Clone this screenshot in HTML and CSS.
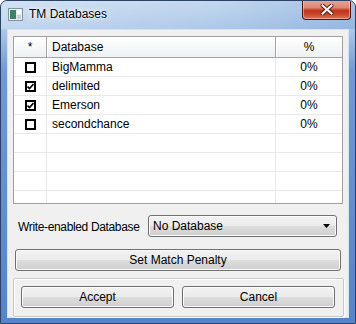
FILE: index.html
```html
<!DOCTYPE html>
<html lang="en">
<head>
  <meta charset="UTF-8" />
  <title>TM Databases</title>
  <link rel="stylesheet" href="styles.css">
</head>
<body>
  <div class="window">
    <div class="titlebar">
      <svg class="app-icon" width="15" height="13" viewBox="0 0 15 13">
        <rect x="0.5" y="0.5" width="14" height="12" fill="#e9ecef" stroke="#8593a3"/>
        <rect x="2" y="2" width="6" height="9" fill="#3f7f6c"/>
        <rect x="9" y="2" width="4" height="4" fill="#ffffff"/>
        <rect x="9" y="7" width="4" height="4" fill="#c9d0d6"/>
      </svg>
      <span class="title">TM Databases</span>
      <div class="close-btn">
        <svg width="14" height="11" viewBox="0 0 14 11">
          <path d="M2.5 1.5 L11.5 9.5 M11.5 1.5 L2.5 9.5" stroke="#5a1d12" stroke-width="4" stroke-linecap="round"/>
          <path d="M2.5 1.5 L11.5 9.5 M11.5 1.5 L2.5 9.5" stroke="#ffffff" stroke-width="2" stroke-linecap="square"/>
        </svg>
      </div>
    </div>

    <div class="client">
      <div class="db-table">
        <div class="head">
          <div class="hcell c-check">*</div>
          <div class="hcell c-name">Database</div>
          <div class="hcell c-pct">%</div>
        </div>
        <div class="rows" id="rows"></div>
      </div>

      <div class="write-row">
        <label class="write-label">Write-enabled Database</label>
        <div class="combo">
          <span>No Database</span>
          <svg class="combo-arrow" width="7" height="4" viewBox="0 0 7 4"><path d="M0 0 H7 L3.5 4 Z" fill="#000"/></svg>
        </div>
      </div>

      <button class="btn penalty">Set Match Penalty</button>

      <div class="group">
        <button class="btn">Accept</button>
        <button class="btn">Cancel</button>
      </div>
    </div>
  </div>

  <script>
    const databases = [
      { name: "BigMamma", checked: false, pct: "0%" },
      { name: "delimited", checked: true, pct: "0%" },
      { name: "Emerson", checked: true, pct: "0%" },
      { name: "secondchance", checked: false, pct: "0%" }
    ];

    const tick = '<svg width="7" height="7" viewBox="0 0 7 7"><path d="M0.5 3.5 L2.5 5.5 L6.5 1" stroke="#000" stroke-width="1.6" fill="none"/></svg>';

    const rows = document.getElementById("rows");
    for (let i = 0; i < 8; i++) {
      const db = databases[i];
      const row = document.createElement("div");
      row.className = "row";
      if (db) {
        row.innerHTML = `
          <div class="cell c-check"><span class="box">${db.checked ? tick : ""}</span></div>
          <div class="cell c-name">${db.name}</div>
          <div class="cell c-pct">${db.pct}</div>`;
      } else {
        row.innerHTML = `
          <div class="cell c-check"></div>
          <div class="cell c-name"></div>
          <div class="cell c-pct"></div>`;
      }
      rows.appendChild(row);
    }
  </script>
</body>
</html>
```

FILE: styles.css
```css
body {
  margin: 0;
  font-family: "Liberation Sans", Arial, sans-serif;
  font-size: 12px;
  color: #000;
  background: #fff;
}
.window {
  width: 356px;
  height: 324px;
  box-sizing: border-box;
  border: 1px solid #2a4266;
  border-radius: 7px 7px 0 0;
  background: linear-gradient(to bottom, #c3d8ef 0, #adc8e9 28px, #6f9ad5 70px, #5584c8 100%);
  display: flex;
  flex-direction: column;
  overflow: hidden;
}
.titlebar {
  height: 28px;
  display: flex;
  align-items: flex-start;
  background: linear-gradient(to right, rgba(255,255,255,0.25), rgba(255,255,255,0) 60%, rgba(80,130,200,0.25));
}
.app-icon {
  margin: 7px 0 0 7px;
}
.title {
  margin: 6px 0 0 6px;
  line-height: 14px;
  text-shadow: 0 0 6px #fff, 0 0 3px #fff;
}
.close-btn {
  margin-left: auto;
  margin-right: 4px;
  margin-top: -1px;
  width: 47px;
  height: 19px;
  border: 1px solid #4a1b14;
  border-top: none;
  border-radius: 0 0 4px 4px;
  background: linear-gradient(to bottom, #e9a898 0%, #dd8570 40%, #c2361d 55%, #c84428 75%, #dc7a5e 100%);
  box-shadow: inset 0 0 0 1px rgba(255,220,210,0.45);
  display: flex;
  align-items: center;
  justify-content: center;
}
.client {
  flex: 1;
  margin: 0 6px 5px 6px;
  border: 1px solid #d6e2f0;
  background: #f0f0f0;
  display: flex;
  flex-direction: column;
}
.db-table {
  margin: 6px 5px 0 5px;
  height: 168px;
  box-sizing: border-box;
  border: 1px solid #a0a0a0;
  background: #fff;
  overflow: hidden;
}
.head, .row {
  display: grid;
  grid-template-columns: 33px 229px 1fr;
}
.hcell {
  height: 20px;
  line-height: 20px;
  box-sizing: content-box;
  border-right: 1px solid #a5a5a5;
  border-bottom: 1px solid #a5a5a5;
  background: linear-gradient(to bottom, #ffffff, #eef0f2);
  box-shadow: inset 1px 1px 0 #fff;
  white-space: nowrap;
}
.hcell.c-pct {
  border-right: none;
}
.cell {
  height: 18px;
  line-height: 18px;
  border-right: 1px solid #e8e8e8;
  border-bottom: 1px solid #e8e8e8;
  white-space: nowrap;
}
.cell.c-pct {
  border-right: none;
}
.c-check, .c-pct {
  text-align: center;
}
.c-name {
  padding-left: 5px;
}
.cell.c-check {
  display: flex;
  align-items: center;
  justify-content: center;
}
.box {
  width: 7px;
  height: 7px;
  border: 2px solid #000;
  background: #fff;
  display: flex;
}
.write-row {
  margin-top: 11px;
  height: 22px;
  display: flex;
  align-items: center;
  padding: 0 11px 0 10px;
}
.write-label {
  padding-top: 2px;
  letter-spacing: -0.35px;
}
.combo {
  margin-left: auto;
  width: 189px;
  height: 22px;
  box-sizing: border-box;
  border: 1px solid #707070;
  border-radius: 3px;
  background: linear-gradient(to bottom, #f2f2f2 0%, #ebebeb 50%, #dddddd 50%, #cfcfcf 100%);
  box-shadow: inset 0 0 0 1px #fbfbfb;
  display: flex;
  align-items: center;
  padding: 0 4px 0 4px;
}
.combo-arrow {
  margin-left: auto;
  margin-right: 2px;
}
.btn {
  height: 22px;
  box-sizing: border-box;
  border: 1px solid #707070;
  border-radius: 3px;
  background: linear-gradient(to bottom, #f2f2f2 0%, #ebebeb 50%, #dddddd 50%, #cfcfcf 100%);
  box-shadow: inset 0 0 0 1px #fbfbfb;
  font-family: inherit;
  font-size: 12px;
  color: #000;
  padding: 0;
}
.penalty {
  margin: 12px 7px 0 7px;
}
.group {
  margin: 7px 4px 0 5px;
  height: 39px;
  box-sizing: border-box;
  border: 1px solid #c8c8c8;
  border-radius: 2px;
  box-shadow: inset 1px 1px 0 #fff, 1px 1px 0 #fff;
  display: flex;
  gap: 8px;
  padding: 7px 8px 0 7px;
}
.group .btn {
  flex: 1;
}
```
